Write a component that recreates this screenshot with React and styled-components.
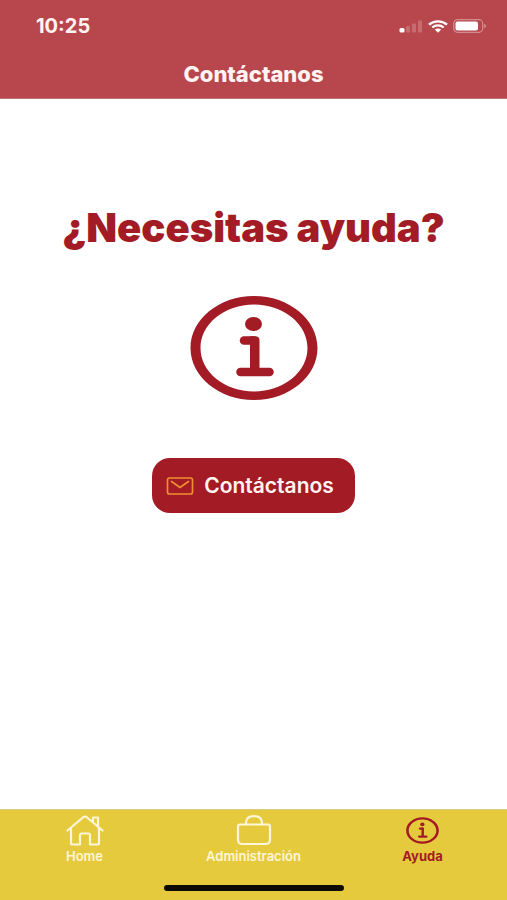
import React from "react";
import styled, { createGlobalStyle } from "styled-components";

const color = {
  header: "#b8474d",
  brand: "#a31b24",
  bar: "#e6ca3d",
  cream: "#fdf6d8",
  light: "#fff4f2",
  orange: "#ef9030",
};

const GlobalStyle = createGlobalStyle`
  * { box-sizing: border-box; }
  body {
    margin: 0;
    background: #fff;
    font-family: Inter, "Liberation Sans", sans-serif;
  }
`;

const Screen = styled.div`
  min-height: 100vh;
  display: flex;
  flex-direction: column;
`;

const Header = styled.header`
  background: ${color.header};
  color: ${color.light};
  border-bottom: 1px solid #b9757a;
`;

const StatusBar = styled.div`
  display: flex;
  align-items: center;
  justify-content: space-between;
  height: 52px;
  padding: 0 20px 0 36px;
`;

const Clock = styled.time`
  font-size: 20px;
  font-weight: 700;
  line-height: 20px;
`;

const StatusIcons = styled.div`
  display: flex;
  align-items: center;
  gap: 5px;
  svg { display: block; }
`;

const ScreenTitle = styled.h1`
  margin: 0;
  padding: 10px 0 12px;
  text-align: center;
  font-size: 22px;
  line-height: 24px;
  font-weight: 800;
`;

const Content = styled.main`
  flex: 1;
  display: flex;
  flex-direction: column;
  align-items: center;
  padding-top: 106px;
  color: ${color.brand};
`;

const Question = styled.h2`
  margin: 0 0 44px;
  font-size: 40px;
  line-height: 46px;
  font-weight: 900;
  white-space: nowrap;
`;

const ContactButton = styled.button`
  display: flex;
  align-items: center;
  gap: 10px;
  height: 55px;
  margin-top: 57px;
  padding: 0 21px 0 14px;
  border: 0;
  border-radius: 18px;
  background: ${color.brand};
  color: ${color.light};
  font-family: inherit;
  font-size: 21px;
  line-height: 26px;
  font-weight: 600;
  cursor: pointer;
`;

const BottomBar = styled.footer`
  background: ${color.bar};
  border-top: 1px solid #dccb7c;
  padding-bottom: 9px;
`;

const Tabs = styled.nav`
  display: grid;
  grid-template-columns: repeat(3, 1fr);
  height: 75px;
`;

const Tab = styled.a`
  display: flex;
  flex-direction: column;
  align-items: center;
  gap: 2px;
  padding-top: 4px;
  color: ${(p) => (p.$active ? color.brand : color.cream)};
  font-size: 13px;
  line-height: 16px;
  font-weight: ${(p) => (p.$active ? 700 : 600)};
  text-decoration: none;
`;

const TabIcon = styled.span`
  display: flex;
  align-items: center;
  height: 32px;
`;

const HomeIndicator = styled.div`
  width: 180px;
  height: 6px;
  margin: 0 auto;
  border-radius: 3px;
  background: #0d0b04;
`;

const SignalIcon = () => (
  <svg width="24" height="14" viewBox="0 0 24 14" fill="#fff" aria-hidden="true">
    <rect x="0.5" y="9" width="5" height="4.5" rx="1.5" />
    <g opacity="0.2">
      <rect x="7" y="7" width="4" height="6.5" rx="1" />
      <rect x="13" y="4.5" width="4" height="9" rx="1" />
      <rect x="19" y="1.5" width="4" height="12" rx="1" />
    </g>
  </svg>
);

const WifiIcon = () => (
  <svg width="20" height="13" viewBox="0 0 20 13" fill="none" stroke="#fff" strokeWidth="2.3" aria-hidden="true">
    <path d="M1 4.6C6 .2 14 .2 19 4.6" />
    <path d="M4.300 7.500C7.500 4.600 12.500 4.600 15.700 7.500" />
    <path d="M6.800 9.600C8.600 8 11.400 8 13.200 9.600L10 12.800Z" fill="#fff" stroke="none" />
  </svg>
);

const BatteryIcon = () => (
  <svg width="34" height="14" viewBox="0 0 34 14" aria-hidden="true">
    <rect x="0.7" y="0.7" width="29" height="12.6" rx="3.8" fill="none" stroke="#fff" strokeOpacity="0.38" strokeWidth="1.2" />
    <rect x="2.5" y="2.5" width="22.5" height="9" rx="2" fill="#fff" />
    <path d="M31.300 4.800Q33 5.500 33 7T31.300 9.200Z" fill="#fff" fillOpacity="0.45" />
  </svg>
);

const InfoIcon = ({ width, height }) => (
  <svg width={width} height={height} viewBox="0 0 128 106" preserveAspectRatio="none" fill="none" stroke="currentColor" aria-hidden="true">
    <path fill="currentColor" stroke="none" fillRule="evenodd" d="M64 1C99 1 127.500 24.300 127.500 53S99 105 64 105S.5 81.700 .5 53S29 1 64 1ZM64 9.500C34.500 9.500 10.500 29 10.500 53S34.500 96.500 64 96.500S117.500 77 117.500 53S93.500 9.500 64 9.500Z" />
    <ellipse cx="63.5" cy="29" rx="8.5" ry="7" fill="currentColor" stroke="none" />
    <path d="M54 45.500H64" strokeWidth="8.500" strokeLinecap="round" />
    <path d="M60 41.300H65Q69.500 41.300 69.500 45.500V77H60Z" fill="currentColor" stroke="none" />
    <path d="M50.500 77H79.500" strokeWidth="8.500" strokeLinecap="round" />
  </svg>
);

const MailIcon = () => (
  <svg width="28" height="18" viewBox="0 0 28 18" fill="none" stroke={color.orange} strokeWidth="1.7" strokeLinecap="round" strokeLinejoin="round" aria-hidden="true">
    <rect x="1.5" y="1" width="25" height="16" rx="2" />
    <path d="M5.500 4.500L14 10.500L22.500 4.500" />
  </svg>
);

const HomeIcon = () => (
  <svg width="38" height="32" viewBox="0 0 38 32" fill="none" stroke="currentColor" strokeWidth="2.2" strokeLinecap="round" strokeLinejoin="round" aria-hidden="true">
    <path d="M1.500 16.500L17.500 3Q19 2 20.500 3L36.500 16.500" />
    <path d="M5 14V29Q5 30.500 6.500 30.500H14V21Q14 19.500 15.500 19.500H22.500Q24 19.500 24 21V30.500H31.500Q33 30.500 33 29V14" />
    <path d="M27 7V3.500H32V12" />
  </svg>
);

const BagIcon = () => (
  <svg width="38" height="32" viewBox="0 0 38 32" fill="none" stroke="currentColor" strokeWidth="2.2" strokeLinecap="round" aria-hidden="true">
    <path d="M5 10.500H33Q35 10.500 35 12.500V26Q35 30 30.500 30H7.500Q3 30 3 26V12.500Q3 10.500 5 10.500Z" />
    <path d="M11 10.500V9C11 4.500 14 2.200 19 2.200S27 4.500 27 9V10.500" />
  </svg>
);

export default function App() {
  return (
    <Screen>
      <GlobalStyle />
      <Header>
        <StatusBar>
          <Clock>10:25</Clock>
          <StatusIcons>
            <SignalIcon />
            <WifiIcon />
            <BatteryIcon />
          </StatusIcons>
        </StatusBar>
        <ScreenTitle>Contáctanos</ScreenTitle>
      </Header>
      <Content>
        <Question>¿Necesitas ayuda?</Question>
        <InfoIcon width={128} height={106} />
        <ContactButton type="button">
          <MailIcon />
          Contáctanos
        </ContactButton>
      </Content>
      <BottomBar>
        <Tabs>
          <Tab href="#home">
            <TabIcon><HomeIcon /></TabIcon>
            Home
          </Tab>
          <Tab href="#administracion">
            <TabIcon><BagIcon /></TabIcon>
            Administración
          </Tab>
          <Tab href="#ayuda" $active aria-current="page">
            <TabIcon><InfoIcon width={33} height={27} /></TabIcon>
            Ayuda
          </Tab>
        </Tabs>
        <HomeIndicator />
      </BottomBar>
    </Screen>
  );
}
